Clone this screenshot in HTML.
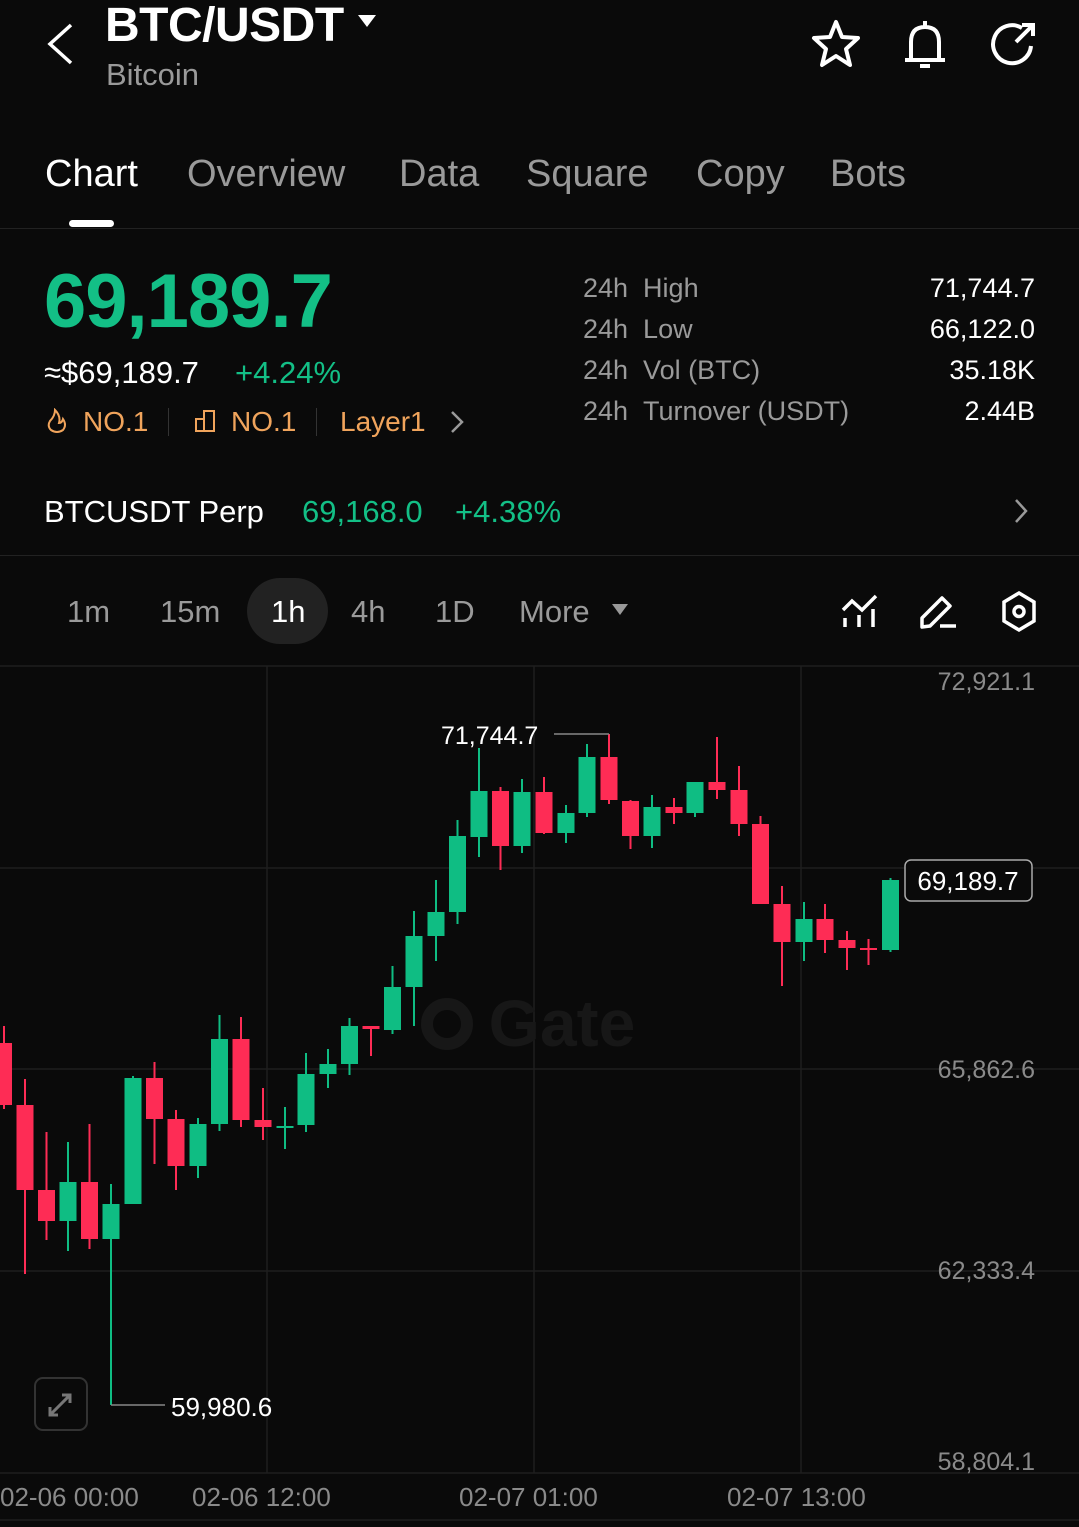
<!DOCTYPE html>
<html><head><meta charset="utf-8"><style>
*{margin:0;padding:0;box-sizing:border-box}
body{width:1079px;height:1527px;background:#0a0a0a;font-family:"Liberation Sans",sans-serif;position:relative;overflow:hidden;color:#fff}
.a{position:absolute;white-space:nowrap}
.g{color:#13bf86}
.gr{color:#9a9a9a}
.o{color:#f0a45c}
</style></head><body>
<svg class="a" style="left:44px;top:22px" width="32" height="44" viewBox="0 0 32 44"><path d="M27 3 L6 22 L27 41" fill="none" stroke="#fff" stroke-width="3.5"/></svg>
<div class="a" style="left:105px;top:-2px;font-size:48px;font-weight:bold;letter-spacing:-0.5px">BTC/USDT</div>
<svg class="a" style="left:357px;top:14px" width="20" height="14"><path d="M1 1 L19 1 L10 13Z" fill="#fff"/></svg>
<div class="a gr" style="left:106px;top:57px;font-size:31px">Bitcoin</div>
<svg class="a" style="left:808px;top:18px" width="56" height="52" viewBox="0 0 56 52"><path d="M28 4 L34 19 L50 20 L38 31 L42 47 L28 38 L14 47 L18 31 L6 20 L22 19Z" fill="none" stroke="#fff" stroke-width="4" stroke-linejoin="round"/></svg>
<svg class="a" style="left:900px;top:18px" width="50" height="52" viewBox="0 0 50 52"><path d="M25 3 V8 M11 42 V24 Q11 9 25 9 Q39 9 39 24 V42 M5 42 H45 M20 48 H30" fill="none" stroke="#fff" stroke-width="4"/></svg>
<svg class="a" style="left:988px;top:20px" width="52" height="50" viewBox="0 0 52 50"><path d="M34 8 A19 19 0 1 0 43 26" fill="none" stroke="#fff" stroke-width="4"/><path d="M28 22 L44 6 M34 5 H45 V16" fill="none" stroke="#fff" stroke-width="4"/></svg>

<div class="a" style="left:45px;top:153px;font-size:38px;color:#fff">Chart</div>
<div class="a gr" style="left:187px;top:153px;font-size:38px">Overview</div>
<div class="a gr" style="left:399px;top:153px;font-size:38px">Data</div>
<div class="a gr" style="left:526px;top:153px;font-size:38px">Square</div>
<div class="a gr" style="left:696px;top:153px;font-size:38px">Copy</div>
<div class="a gr" style="left:830px;top:153px;font-size:38px">Bots</div>
<div class="a" style="left:69px;top:220px;width:45px;height:7px;border-radius:4px;background:#fff"></div>
<div class="a" style="left:0;top:228px;width:1079px;height:1px;background:#222"></div>

<div class="a g" style="left:44px;top:258px;font-size:76px;font-weight:bold;letter-spacing:-1px">69,189.7</div>
<div class="a" style="left:44px;top:355px;font-size:31px">≈$69,189.7</div>
<div class="a g" style="left:235px;top:355px;font-size:31px">+4.24%</div>
<svg class="a" style="left:46px;top:408px" width="22" height="26" viewBox="0 0 22 26"><path d="M9 2 Q9 8 4 13 Q1 18 5 22 Q11 26 17 22 Q21 17 17 11 Q16 15 13 15 Q15 8 9 2Z" fill="none" stroke="#f0a45c" stroke-width="2"/></svg>
<div class="a o" style="left:83px;top:406px;font-size:28px">NO.1</div>
<div class="a" style="left:168px;top:408px;width:1px;height:28px;background:#333"></div>
<svg class="a" style="left:194px;top:409px" width="24" height="24" viewBox="0 0 24 24"><path d="M2 22 V10 H10 V22 Z M10 22 V2 H20 V22 H10" fill="none" stroke="#f0a45c" stroke-width="2"/></svg>
<div class="a o" style="left:231px;top:406px;font-size:28px">NO.1</div>
<div class="a" style="left:316px;top:408px;width:1px;height:28px;background:#333"></div>
<div class="a o" style="left:340px;top:406px;font-size:28px">Layer1</div>
<svg class="a" style="left:448px;top:410px" width="18" height="24"><path d="M4 2 L14 12 L4 22" fill="none" stroke="#999" stroke-width="2.5"/></svg>

<div class="a gr" style="left:583px;top:268px;font-size:27px;line-height:41px">24h&nbsp;&nbsp;High<br>24h&nbsp;&nbsp;Low<br>24h&nbsp;&nbsp;Vol (BTC)<br>24h&nbsp;&nbsp;Turnover (USDT)</div>
<div class="a" style="right:44px;top:268px;font-size:27px;line-height:41px;text-align:right">71,744.7<br>66,122.0<br>35.18K<br>2.44B</div>

<div class="a" style="left:44px;top:494px;font-size:31px">BTCUSDT Perp</div>
<div class="a g" style="left:302px;top:494px;font-size:31px">69,168.0</div>
<div class="a g" style="left:455px;top:494px;font-size:31px">+4.38%</div>
<svg class="a" style="left:1012px;top:498px" width="18" height="26"><path d="M4 2 L14 13 L4 24" fill="none" stroke="#999" stroke-width="2.5"/></svg>
<div class="a" style="left:0;top:555px;width:1079px;height:1px;background:#222"></div>

<div class="a" style="left:247px;top:578px;width:81px;height:66px;border-radius:33px;background:#222"></div>
<div class="a gr" style="left:67px;top:594px;font-size:31px">1m</div>
<div class="a gr" style="left:160px;top:594px;font-size:31px">15m</div>
<div class="a" style="left:271px;top:594px;font-size:31px">1h</div>
<div class="a gr" style="left:351px;top:594px;font-size:31px">4h</div>
<div class="a gr" style="left:435px;top:594px;font-size:31px">1D</div>
<div class="a gr" style="left:519px;top:594px;font-size:31px">More</div>
<svg class="a" style="left:611px;top:603px" width="18" height="13"><path d="M1 1 H17 L9 12Z" fill="#999"/></svg>
<svg class="a" style="left:840px;top:592px" width="40" height="40" viewBox="0 0 40 40"><path d="M3 18 L12 9 L22 18 L36 4" fill="none" stroke="#fff" stroke-width="3.5"/><path d="M5 26 V35 M19 23 V35 M33 17 V35" stroke="#fff" stroke-width="3.5"/></svg>
<svg class="a" style="left:918px;top:591px" width="42" height="40" viewBox="0 0 42 40"><path d="M4 36 V27 L24 7 L32 15 L12 35 Z" fill="none" stroke="#fff" stroke-width="3.5" stroke-linejoin="round"/><path d="M22 35 H38" stroke="#fff" stroke-width="3.5"/></svg>
<svg class="a" style="left:998px;top:590px" width="42" height="44" viewBox="0 0 42 44"><path d="M21 3 L36 12 V31 L21 40 L6 31 V12Z" fill="none" stroke="#fff" stroke-width="3.5"/><circle cx="21" cy="21.5" r="5" fill="none" stroke="#fff" stroke-width="3.5"/></svg>

<svg class="a" style="left:0;top:0" width="1079" height="1527">
<g stroke="#1e1e1e" stroke-width="1.5">
<line x1="0" y1="666" x2="1079" y2="666"/>
<line x1="0" y1="868" x2="1079" y2="868"/>
<line x1="0" y1="1069" x2="1079" y2="1069"/>
<line x1="0" y1="1271" x2="1079" y2="1271"/>
<line x1="0" y1="1473" x2="1079" y2="1473"/>
<line x1="0" y1="1520" x2="1079" y2="1520"/>
<line x1="267" y1="666" x2="267" y2="1473"/>
<line x1="534" y1="666" x2="534" y2="1473"/>
<line x1="801" y1="666" x2="801" y2="1473"/>
</g>
<circle cx="447" cy="1024" r="20" fill="none" stroke="#171717" stroke-width="12"/>
<text x="562" y="1046" font-family="Liberation Sans" font-weight="bold" font-size="66" fill="#171717" text-anchor="middle">Gate</text>
<g font-family="Liberation Sans" font-size="25" fill="#8a8a8a" text-anchor="end">
<text x="1035" y="690">72,921.1</text>
<text x="1035" y="1078">65,862.6</text>
<text x="1035" y="1279">62,333.4</text>
<text x="1035" y="1470">58,804.1</text>
</g>
<g font-family="Liberation Sans" font-size="26" fill="#8a8a8a">
<text x="0" y="1506">02-06 00:00</text>
<text x="192" y="1506">02-06 12:00</text>
<text x="459" y="1506">02-07 01:00</text>
<text x="727" y="1506">02-07 13:00</text>
</g>
<g id="c"></g>
<path d="M554 734 H609" stroke="#888" stroke-width="1.5"/>
<text x="441" y="744" font-family="Liberation Sans" font-size="25" fill="#fff">71,744.7</text>
<path d="M111 1405 H165" stroke="#888" stroke-width="1.5"/>
<text x="171" y="1416" font-family="Liberation Sans" font-size="26" fill="#fff">59,980.6</text>
<rect x="905" y="860" width="127" height="41" rx="6" fill="#0a0a0a" stroke="#aaa" stroke-width="1.5"/>
<text x="968" y="890" font-family="Liberation Sans" font-size="26" fill="#fff" text-anchor="middle">69,189.7</text>
<rect x="35" y="1378" width="52" height="52" rx="8" fill="none" stroke="#333" stroke-width="2"/>
<path d="M50 1415 L70 1395 M62 1395 H70 V1403 M50 1407 V1415 H58" fill="none" stroke="#777" stroke-width="3"/>
</svg>
<script>
var G="#0fbd83",R="#fe2c55";
var d=[[4,1043,1105,1026,1109,R],[25,1105,1190,1079,1274,R],[46.5,1190,1221,1132,1240,R],[68,1182,1221,1142,1251,G],[89.5,1182,1239,1124,1249,R],[111,1204,1239,1184,1405,G],[133,1078,1204,1076,1204,G],[154.5,1078,1119,1062,1164,R],[176,1119,1166,1110,1190,R],[198,1124,1166,1118,1178,G],[219.5,1039,1124,1015,1131,G],[241,1039,1120,1017,1127,R],[263,1120,1127,1088,1140,R],[285,1126,1128,1107,1149,G],[306,1074,1125,1053,1132,G],[328,1064,1074,1049,1088,G],[349.5,1026,1064,1018,1075,G],[371,1026,1029,1026,1056,R],[392.5,987,1030,966,1034,G],[414,936,987,911,1026,G],[436,912,936,880,961,G],[457.5,836,912,820,924,G],[479,791,837,748,857,G],[500.5,791,846,787,870,R],[522,792,846,779,853,G],[544,792,833,777,834,R],[566,813,833,805,843,G],[587,757,813,744,817,G],[609,757,800,734,804,R],[630.5,801,836,800,849,R],[652,807,836,795,848,G],[674,807,813,798,824,R],[695,782,813,782,817,G],[717,782,790,737,799,R],[739,790,824,766,836,R],[760.5,824,904,816,904,R],[782,904,942,886,986,R],[804,919,942,902,961,G],[825,919,940,904,953,R],[847,940,948,931,970,R],[868.5,948,950,939,965,R],[890.5,880,950,878,952,G]];
var s="";d.forEach(function(c){var w=c[0]<10?12:17,x=c[0]<10?0:c[0]-8.5;s+='<line x1="'+c[0]+'" x2="'+c[0]+'" y1="'+c[3]+'" y2="'+c[4]+'" stroke="'+c[5]+'" stroke-width="2"/><rect x="'+x+'" y="'+c[1]+'" width="'+w+'" height="'+Math.max(2,c[2]-c[1])+'" fill="'+c[5]+'"/>';});
document.getElementById("c").innerHTML=s;
</script>
</body></html>
